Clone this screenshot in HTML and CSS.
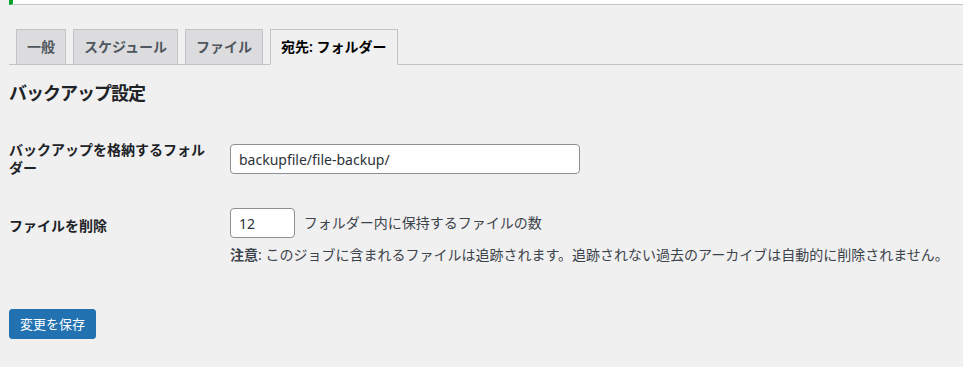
FILE: index.html
```html
<!DOCTYPE html>
<html lang="ja">

<head>
    <meta charset="UTF-8">
    <meta name="viewport" content="width=device-width, initial-scale=1.0">
    <title>ジョブ編集</title>
    <link rel="stylesheet" href="styles.css">
</head>

<body>
    <div class="wrap">
        <div class="notice"></div>

        <nav class="nav-tab-wrapper">
            <a class="nav-tab" href="#">一般</a>
            <a class="nav-tab" href="#">スケジュール</a>
            <a class="nav-tab" href="#">ファイル</a>
            <a class="nav-tab nav-tab-active" href="#">宛先: フォルダー</a>
        </nav>

        <h3 class="title">バックアップ設定</h3>

        <table class="form-table">
            <tr>
                <th><label for="backupdir">バックアップを格納するフォルダー</label></th>
                <td>
                    <input type="text" id="backupdir" class="regular-text" value="backupfile/file-backup/">
                </td>
            </tr>
            <tr>
                <th><label for="maxbackups">ファイルを削除</label></th>
                <td class="td-multi">
                    <input type="number" id="maxbackups" class="small-text" value="12">
                    <span class="after-input">フォルダー内に保持するファイルの数</span>
                    <p class="note"><strong>注意</strong>: このジョブに含まれるファイルは追跡されます。追跡されない過去のアーカイブは自動的に削除されません。</p>
                </td>
            </tr>
        </table>

        <p class="submit">
            <button class="button-primary" type="button">変更を保存</button>
        </p>
    </div>
</body>

</html>
```

FILE: styles.css
```css
* {
    box-sizing: border-box;
}

body {
    margin: 0;
    background: #f0f0f1;
    color: #1d2327;
    font-family: "Noto Sans", "Noto Sans CJK JP", sans-serif;
    font-size: 14px;
    line-height: 1.4;
}

.wrap {
    padding-left: 9px;
}

.notice {
    height: 5px;
    background: #fff;
    border-left: 4px solid #00a32a;
    border-bottom: 1px solid #c3c4c7;
    margin-bottom: 15px;
}

.nav-tab-wrapper {
    display: flex;
    padding-top: 9px;
    border-bottom: 1px solid #c3c4c7;
}

.nav-tab {
    margin-left: 7px;
    margin-bottom: -1px;
    padding: 5px 10px;
    border: 1px solid #c3c4c7;
    border-bottom: 1px solid #c3c4c7;
    background: #dcdcde;
    color: #50575e;
    font-size: 14px;
    font-weight: 600;
    line-height: 24px;
    text-decoration: none;
}

.nav-tab-active {
    background: #f0f0f1;
    border-bottom-color: #f0f0f1;
    color: #000;
}

.title {
    margin: 18px 0;
    font-size: 18px;
    line-height: 20px;
    font-weight: 700;
    letter-spacing: -1px;
    color: #1d2327;
}

.form-table {
    border-collapse: collapse;
    margin-top: 0;
}

.form-table th {
    width: 211px;
    padding: 20px 10px 20px 0;
    vertical-align: top;
    text-align: left;
    font-weight: 600;
    line-height: 18px;
}

.form-table td {
    padding: 15px 10px;
    vertical-align: middle;
    line-height: 18px;
}

.form-table td.td-multi {
    padding-top: 11px;
}

.regular-text,
.small-text {
    height: 30px;
    padding: 0 8px;
    border: 1px solid #8c8f94;
    border-radius: 4px;
    background: #fff;
    color: #2c3338;
    font-family: inherit;
    font-size: 14px;
    vertical-align: middle;
}

.regular-text {
    width: 350px;
}

.small-text {
    width: 65px;
    -moz-appearance: textfield;
}

.small-text::-webkit-inner-spin-button,
.small-text::-webkit-outer-spin-button {
    -webkit-appearance: none;
    margin: 0;
}

.after-input {
    margin-left: 5px;
    color: #3c434a;
    vertical-align: middle;
}

.note {
    margin: 8px 0 0;
    color: #3c434a;
}

.note strong {
    font-weight: 600;
}

.submit {
    margin: 20px 0 0;
    padding-top: 10px;
}

.button-primary {
    min-height: 30px;
    padding: 0 10px;
    border: 1px solid #2271b1;
    border-radius: 3px;
    background: #2271b1;
    color: #fff;
    font-family: inherit;
    font-size: 13px;
    line-height: 28px;
    cursor: pointer;
}
```
